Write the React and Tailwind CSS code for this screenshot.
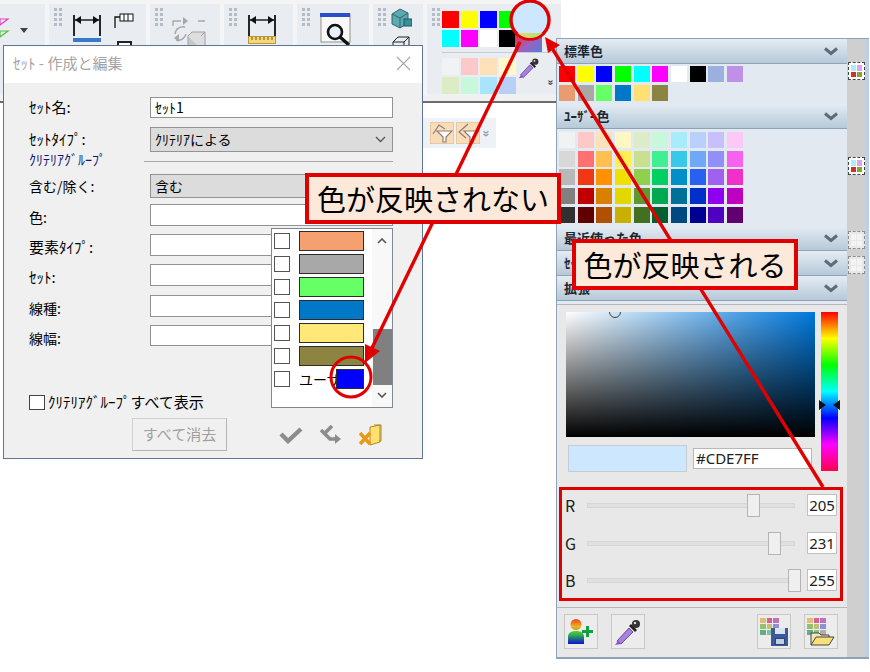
import React from "react";

const STANDARD = ["#ff0000", "#ffff00", "#0000ff", "#00ff00", "#00ffff", "#ff00ff", "#ffffff", "#000000", "#9cb0e0", "#c090e8", "#e89c70", "#a8a8a8", "#66ff66", "#0078c8", "#ffe070", "#8c8440"];
const USER = [
  "#f0f2f4", "#ffc8c8", "#ffe0b8", "#fff8c4", "#dcecc8", "#c8f8dc", "#a8ecfb", "#b8d0fb", "#c8c0fb", "#fcc8f8",
  "#d8d8d8", "#ff7070", "#ffc050", "#fff050", "#c8e090", "#40f090", "#38c8e8", "#70a8f8", "#9090f8", "#f860f0",
  "#b8b8b8", "#f03818", "#ff9000", "#f0e000", "#90d050", "#00d060", "#0090c8", "#2860f0", "#a060f0", "#f030c8",
  "#808080", "#c00000", "#d88000", "#e0d800", "#609830", "#00a850", "#007098", "#0030c8", "#9000f0", "#c000c0",
  "#303030", "#600000", "#b05000", "#c8b000", "#407020", "#006030", "#004880", "#000090", "#5000c0", "#600070",
];
const TOOLBAR_TOP = ["#ff0000", "#ffff00", "#0000ff", "#00ff00", "#00ffff", "#ff00ff", "#ffffff", "#000000"];
const TOOLBAR_FADED = ["#f0f2f4", "#ffc8c8", "#ffe0b8", "#fff8c8", "#dcecc4", "#c8f8dc", "#a8e4fb", "#b8d0f8"];
const DROPDOWN = ["#f4a070", "#a8a8a8", "#66ff66", "#0078c8", "#ffe878", "#8c8440"];

const Grip = () => (
  <div className="grid grid-cols-2 gap-x-[2px] gap-y-[2px] w-[8px] shrink-0">
    {[0, 1, 2, 3, 4, 5, 6, 7].map((i) => (
      <div key={i} className="w-[3px] h-[3px] bg-[#b4bcc6]" />
    ))}
  </div>
);

const Swatches = ({ colors }) => (
  <div className="grid grid-cols-[repeat(10,16px)] gap-[2.67px]">
    {colors.map((c, i) => (
      <div key={i} className="h-[16px]" style={{ backgroundColor: c }} />
    ))}
  </div>
);

const Chevron = () => (
  <svg width="14" height="9" viewBox="0 0 14 9">
    <path d="M1 1.5l6 5 6-5" fill="none" stroke="#5c6c7a" strokeWidth="3" />
  </svg>
);

const SectionHeader = ({ label, className = "" }) => (
  <div className={"h-[25px] flex items-center justify-between pl-[7px] pr-[9px] bg-[linear-gradient(to_bottom,#e4ecf3,#b6c9d8)] border-b border-[#8ea3b6] " + className}>
    <span className="text-[13px] font-bold text-[#1c2630] whitespace-nowrap">{label}</span>
    <Chevron />
  </div>
);

const StripIcon = ({ faded }) => (
  <div className={"w-[17px] h-[18px] border border-dashed p-[2px] grid grid-cols-2 gap-[1px] " + (faded ? "border-[#8c8c8c] bg-[#e8e8e8]" : "border-[#444444] bg-white")}>
    <div className={faded ? "bg-[#f4f4f4]" : "bg-[#a8f0f8]"} />
    <div className={faded ? "bg-[#f4f4f4]" : "bg-[#e8a0e8]"} />
    <div className={faded ? "bg-[#f4f4f4]" : "bg-[#d03030]"} />
    <div className={faded ? "bg-[#f4f4f4]" : "bg-[#80a830]"} />
  </div>
);

const Field = ({ label, className = "", labelClass = "text-[14px]", select, children }) => (
  <div className={"flex items-center " + className}>
    <div className={"w-[121px] text-black whitespace-nowrap " + labelClass}>{label}</div>
    <div className={"w-[243px] h-full border border-[#939393] flex items-center justify-between pl-[4px] pr-[6px] text-[14px] text-black " + (select ? "bg-[#dcdcdc]" : "bg-white")}>
      <span>{children}</span>
      {select && (
        <svg width="11" height="7" viewBox="0 0 11 7">
          <path d="M1 1l4.5 4.5L10 1" fill="none" stroke="#555555" strokeWidth="1.3" />
        </svg>
      )}
    </div>
  </div>
);

const DimIcon = () => (
  <svg width="30" height="21" viewBox="0 0 30 21">
    <path d="M2 0v21M28 0v21" stroke="#111111" strokeWidth="1.8" />
    <path d="M3 5h24" stroke="#111111" strokeWidth="1.4" />
    <path d="M3 5l6-4v8zM27 5l-6-4v8z" fill="#111111" />
  </svg>
);

const SliderRow = ({ label, thumb, value, className = "" }) => (
  <div className={"flex items-center h-[22px] " + className}>
    <div className="w-[24px] text-[16px] text-[#202020] pl-[2px]">{label}</div>
    <div className="relative w-[208px] h-[5px] bg-[#e0e0e0] border border-[#d6d6d6]">
      <div className={"absolute -top-[10px] w-[13px] h-[23px] bg-[#efefef] border border-[#b4b4b4] " + thumb} />
    </div>
    <div className="ml-[12px] w-[30px] h-[22px] bg-white border border-[#c0c0c0] flex items-center justify-center text-[15px] text-[#202020] font-['Noto_Sans',sans-serif]">
      {value}
    </div>
  </div>
);

const IconButton = ({ className = "", children }) => (
  <div className={"w-[34px] h-[35px] bg-[#ececec] border border-[#c8c8c8] flex items-center justify-center " + className}>{children}</div>
);

const Dropper = ({ size = 28 }) => (
  <svg width={size} height={size} viewBox="0 0 28 28">
    <path d="M3 23L15 10l4 4L7 26z" fill="#a880e0" stroke="#54307c" strokeWidth="0.8" />
    <path d="M1 27l3-4 3 3z" fill="#8c50d8" />
    <path d="M15 8l6 6 2-2-6-6z" fill="#222222" />
    <circle cx="22" cy="6" r="4" fill="#333333" />
    <circle cx="21" cy="5" r="1.2" fill="#dddddd" />
  </svg>
);

const MiniPalette = () => (
  <div className="grid grid-cols-3 gap-[1px] w-[19px]">
    {["#e0c070", "#d86090", "#c070c0", "#90c070", "#c0c070", "#9090d0", "#60b080", "#80c0a0", "#b0b0b0"].map((c, i) => (
      <div key={i} className="h-[5px]" style={{ backgroundColor: c }} />
    ))}
  </div>
);

const Toolbar = () => (
  <div className="w-[561px] shrink-0">
    <div className="h-[4px] bg-[#f4f4f4]" />
    <div className="flex gap-[4px] h-[90px] bg-[#f4f5f6]">
      <div className="w-[45px] bg-[#e9edf1] flex items-start pt-[13px]">
        <svg width="10" height="24" viewBox="0 0 10 24">
          <path d="M0 2h8L0 8z" fill="none" stroke="#e040c0" strokeWidth="1.2" />
          <path d="M0 14h8L0 20z" fill="none" stroke="#50c040" strokeWidth="1.2" />
        </svg>
        <svg className="ml-[10px] mt-[11px]" width="8" height="5" viewBox="0 0 8 5">
          <path d="M0 0h8L4 5z" fill="#444444" />
        </svg>
      </div>
      <div className="w-[97px] bg-[#e9edf1] flex items-start pl-[5px] pt-[4px]">
        <Grip />
        <div className="ml-[10px] mt-[7px] flex flex-col">
          <DimIcon />
          <div className="w-[28px] h-[4px] mt-[2px] ml-[1px] bg-[#3a78c8]" />
        </div>
        <div className="ml-[12px] mt-[5px] flex flex-col items-center">
          <svg width="20" height="16" viewBox="0 0 20 16">
            <path d="M1 15V4h5" fill="none" stroke="#111111" strokeWidth="1.3" />
            <rect x="6" y="1" width="13" height="7" fill="#ffffff" stroke="#111111" />
            <path d="M10 1v7M14 1v7" stroke="#111111" />
          </svg>
          <div className="w-[15px] h-[12px] mt-[12px] bg-white border-2 border-[#222222]" />
        </div>
      </div>
      <div className="w-[70px] bg-[#e9edf1] flex items-start pl-[5px] pt-[4px]">
        <Grip />
        <svg className="ml-[9px] mt-[8px]" width="34" height="36" viewBox="0 0 34 36">
          <path d="M1 10V5h8M26 5h7M3 18a8 8 0 0 1 10-7M14 18a8 8 0 0 1-10 6" fill="none" stroke="#a8a8a8" strokeWidth="1.4" />
          <path d="M11 1l5 4-5 4zM7 18l-5 4 5 4z" fill="#a8a8a8" />
          <rect x="16" y="20" width="13" height="13" fill="#c8c8c8" stroke="#a0a0a0" />
          <path d="M16 20l4-4h13v13l-4 4M29 20l4-4" fill="#dedede" stroke="#a0a0a0" />
        </svg>
      </div>
      <div className="w-[69px] bg-[#e9edf1] flex items-start pl-[5px] pt-[4px]">
        <Grip />
        <div className="ml-[10px] mt-[7px] flex flex-col">
          <DimIcon />
          <svg width="28" height="8" viewBox="0 0 28 8" className="ml-[1px]">
            <rect x="0.5" y="0.5" width="27" height="7" fill="#f4d878" stroke="#b89838" />
            <path d="M4 1v3M8 1v3M12 1v3M16 1v3M20 1v3M24 1v3" stroke="#6c5818" />
          </svg>
        </div>
      </div>
      <div className="w-[72px] bg-[#e9edf1] flex items-start pl-[5px] pt-[4px]">
        <Grip />
        <svg className="ml-[10px] mt-[5px]" width="32" height="36" viewBox="0 0 32 36">
          <rect x="1" y="1" width="29" height="28" fill="#f8f8f8" stroke="#909090" />
          <rect x="0" y="0" width="30" height="4" fill="#2a50c8" />
          <circle cx="15" cy="19" r="7" fill="#e8f0fa" stroke="#111111" strokeWidth="2.6" />
          <path d="M20 24l9 8" stroke="#111111" strokeWidth="3.2" />
        </svg>
      </div>
      <div className="w-[50px] bg-[#e9edf1] flex items-start pl-[5px] pt-[4px]">
        <Grip />
        <div className="ml-[4px] flex flex-col items-center">
          <svg width="22" height="22" viewBox="0 0 22 22">
            <path d="M2 6l8-5 8 4v10l-8 5-8-4z" fill="#5ea8b0" stroke="#2c6870" />
            <path d="M2 6l8 4 8-5M10 10v10" fill="none" stroke="#2c6870" />
            <rect x="14" y="11" width="8" height="7" fill="#3a9098" stroke="#1c5860" />
          </svg>
          <svg className="mt-[6px]" width="18" height="14" viewBox="0 0 18 14">
            <path d="M1 6l5-5h11v8l-5 4H1zM1 6h11v7M12 6l5-5" fill="none" stroke="#222222" />
          </svg>
        </div>
      </div>
      <div className="flex-1 bg-[#e9edf1] pl-[5px] pt-[3px] flex items-start">
        <div className="mt-[1px]"><Grip /></div>
        <div className="ml-[2px] mt-[4px] w-[115px] relative">
          <div className="grid grid-cols-[repeat(4,17px)] gap-[2px]">
            {TOOLBAR_TOP.map((c, i) => (
              <div key={i} className="h-[17px]" style={{ backgroundColor: c }} />
            ))}
          </div>
          <div className="h-[1px] mt-[5px] mr-[2px] bg-[#c6ccd2]" />
          <div className="grid grid-cols-[repeat(4,17px)] gap-[2px] mt-[5px]">
            {TOOLBAR_FADED.map((c, i) => (
              <div key={i} className="h-[17px]" style={{ backgroundColor: c }} />
            ))}
          </div>
          {/* colour wheel button and dropper sit over the swatch block */}
          <div className="absolute left-[73px] top-[24px] w-[27px] h-[17px] bg-[linear-gradient(135deg,#e83030,#a060c0_50%,#5080d8)]" />
          <div className="absolute left-[76px] top-[46px]">
            <Dropper size={22} />
          </div>
          <div className="absolute left-[107px] top-[66px] text-[11px] leading-none text-[#333333] font-bold rotate-90">»</div>
        </div>
      </div>
    </div>
    <div className="h-[7px] bg-[#f0f1f2]" />
    <div className="h-[2px] bg-[#6c6c6c]" />
    <div className="ml-[422px] mt-[15px] w-[74px] h-[30px] bg-[#eef2f7] flex items-center pl-[8px] gap-[2px]">
      <div className="w-[24px] h-[22px] bg-[#fbdcb8] border border-[#e8c8a0] flex items-center justify-center">
        <svg width="22" height="20" viewBox="0 0 22 20">
          <path d="M2 11L8 2l6 4" fill="none" stroke="#888078" strokeWidth="1.2" />
          <path d="M6 8h15l-6 6v5h-3v-5z" fill="#ffffff" stroke="#888078" strokeWidth="1.2" />
        </svg>
      </div>
      <div className="w-[24px] h-[22px] bg-[#fbdcb8] border border-[#e8c8a0] flex items-center justify-center">
        <svg width="22" height="20" viewBox="0 0 22 20">
          <path d="M11 1L2 9l7 6" fill="none" stroke="#888078" strokeWidth="1.2" />
          <path d="M7 8h15l-6 6v5h-3v-5z" fill="#ffffff" stroke="#888078" strokeWidth="1.2" />
        </svg>
      </div>
      <span className="ml-[2px] text-[13px] leading-none text-[#8c98a8] font-bold rotate-90">»</span>
    </div>
  </div>
);

const Dialog = () => (
  <div className="absolute left-[3px] top-[45px] w-[420px] h-[414px] z-10 border border-[#5f7596] bg-[#f0f0f0]">
    <div className="h-[37px] bg-white flex items-center justify-between pl-[9px] pr-[11px] pb-[3px]">
      <span className="text-[15px] text-[#a4a4a4]">ｾｯﾄ - 作成と編集</span>
      <svg width="15" height="15" viewBox="0 0 15 15">
        <path d="M1 1l13 13M14 1L1 14" stroke="#a8a8a8" strokeWidth="1.1" />
      </svg>
    </div>
    <div className="pl-[25px] pt-[14px]">
      <Field label="ｾｯﾄ名:" labelClass="text-[15px]" className="h-[21px]">ｾｯﾄ1</Field>
      <Field label="ｾｯﾄﾀｲﾌﾟ:" labelClass="text-[15px]" className="h-[25px] mt-[9px]" select>ｸﾘﾃﾘｱによる</Field>
      <div className="h-[22px] flex items-start">
        <span className="text-[14px] leading-[16px] mt-[-1px] w-[115px] text-[#14146e] whitespace-nowrap">ｸﾘﾃﾘｱｸﾞﾙｰﾌﾟ</span>
        <div className="w-[249px] h-[1px] mt-[9px] bg-[#a8a8a8]" />
      </div>
      <Field label="含む/除く:" className="h-[24px]" select>含む</Field>
      <Field label="色:" labelClass="text-[14px] pt-[5px]" className="h-[22px] mt-[6px]" />
      <Field label="要素ﾀｲﾌﾟ:" labelClass="text-[15px] pt-[5px]" className="h-[22px] mt-[8px]" />
      <Field label="ｾｯﾄ:" labelClass="text-[15px] pt-[5px]" className="h-[22px] mt-[8px]" />
      <Field label="線種:" labelClass="text-[14px] pt-[5px]" className="h-[22px] mt-[9px]" />
      <Field label="線幅:" labelClass="text-[14px] pt-[5px]" className="h-[21px] mt-[8px]" />
      <div className="flex items-center mt-[49px] h-[15px]">
        <div className="w-[16px] h-[15px] bg-white border border-[#444444]" />
        <span className="ml-[3px] text-[15px] text-black whitespace-nowrap">ｸﾘﾃﾘｱｸﾞﾙｰﾌﾟすべて表示</span>
      </div>
      <div className="flex items-center mt-[8px]">
        <div className="ml-[103px] w-[95px] h-[33px] bg-[#f0f0f0] border border-[#d0d0d0] border-b-[#b4b4b4] border-r-[#b4b4b4] flex items-center justify-center text-[15px] text-[#a0a0a0]">
          すべて消去
        </div>
        <svg className="ml-[52px]" width="24" height="18" viewBox="0 0 24 18">
          <path d="M2 8l7 7L22 3" fill="none" stroke="#8c8c8c" strokeWidth="4.4" />
        </svg>
        <svg className="ml-[16px]" width="24" height="20" viewBox="0 0 24 20">
          <path d="M2 5l9 9h8" fill="none" stroke="#8c8c8c" strokeWidth="3.6" />
          <path d="M13 1L5 9" stroke="#8c8c8c" strokeWidth="3.6" />
          <path d="M16 9l6 5-6 5z" fill="#8c8c8c" />
        </svg>
        <svg className="ml-[16px]" width="23" height="22" viewBox="0 0 23 22">
          <path d="M11 3l10-2v17l-10 3z" fill="#ffe070" stroke="#b08820" />
          <path d="M15 1h7v16h-2" fill="none" stroke="#b08820" />
          <path d="M1 9l10 11M11 9L1 20" stroke="#e89818" strokeWidth="3.6" />
        </svg>
      </div>
    </div>

    {/* open colour dropdown */}
    <div className="absolute left-[267px] top-[182px] w-[122px] h-[180px] bg-white border border-[#7f8790] flex">
      <div className="w-[100px] pl-[2px] pt-[2px]">
        {DROPDOWN.map((c) => (
          <div key={c} className="flex items-center h-[20px] mb-[3px]">
            <div className="w-[16px] h-[16px] border border-[#555555] bg-white" />
            <div className="ml-[9px] w-[65px] h-[20px] border border-[#2c2c2c]" style={{ backgroundColor: c }} />
          </div>
        ))}
        <div className="flex items-center h-[20px]">
          <div className="w-[16px] h-[16px] border border-[#555555] bg-white" />
          <div className="ml-[9px] w-[37px] whitespace-nowrap text-[14px] text-black">ユーザー</div>
          <div className="relative w-[28px] h-[20px] bg-[#0000ff] border border-[#2c2c2c]" />
        </div>
      </div>
      <div className="w-[20px] bg-[#f8f8f8] flex flex-col items-center pt-[9px]">
        <svg width="10" height="6" viewBox="0 0 10 6">
          <path d="M1 5l4-4 4 4" fill="none" stroke="#555555" strokeWidth="1.6" />
        </svg>
        <div className="w-[19px] h-[56px] mt-[85px] bg-[#808080]" />
        <svg className="mt-[7px]" width="10" height="6" viewBox="0 0 10 6">
          <path d="M1 1l4 4 4-4" fill="none" stroke="#555555" strokeWidth="1.6" />
        </svg>
      </div>
    </div>
  </div>
);

const ColorPanel = () => (
  <div className="relative z-10 -ml-[5px] mt-[38px] w-[313px] h-[621px] flex border-t border-b-2 border-l border-[#8ea3b6] bg-[#e2e9f1] font-['Noto_Sans_CJK_JP',sans-serif]">
    <div className="w-[290px] flex flex-col">
      <SectionHeader label="標準色" />
      <div className="h-[40px] pl-[2px] pt-[2px] bg-[#e2e9f1]">
        <Swatches colors={STANDARD} />
      </div>
      <SectionHeader label="ﾕｰｻﾞｰ色" />
      <div className="h-[97px] pl-[2px] pt-[3px] bg-[#e2e9f1]">
        <Swatches colors={USER} />
      </div>
      <SectionHeader label="最近使った色" />
      <SectionHeader label="ｾｯﾄ" />
      <SectionHeader label="拡張" />
      <div className="mt-[3px] h-[304px] bg-[#e8e8e8] border-t border-b border-[#b4b8bc] pt-[7px]">
        <div className="flex pl-[9px]">
          <div className="w-[249px]">
            <div className="relative w-[249px] h-[125px] overflow-hidden bg-[linear-gradient(to_bottom,transparent,#000000),linear-gradient(to_right,#ffffff,#0078dc)]">
              <div className="absolute left-[43px] -top-[6px] w-[12px] h-[12px] rounded-full border border-[#404040]" />
            </div>
            <div className="flex mt-[8px] pl-[2px]">
              <div className="w-[119px] h-[27px] bg-[#cde7ff] border border-[#c4ccd4]" />
              <div className="ml-[6px] mt-[3px] w-[119px] h-[21px] bg-white border border-[#b8b8b8] flex items-center pl-[2px] text-[15px] text-[#202020] font-['Noto_Sans',sans-serif]">
                #CDE7FF
              </div>
            </div>
          </div>
          <div className="relative ml-[6px] w-[17px] h-[159px] bg-[linear-gradient(to_bottom,#ff0000,#ffff00,#00ff00,#00ffff,#0000ff,#ff00ff,#ff0050)]">
            <svg className="absolute -left-[2px] top-[88px]" width="21" height="10" viewBox="0 0 21 10">
              <path d="M0 0l7 5-7 5zM21 0l-7 5 7 5z" fill="#111111" />
            </svg>
          </div>
        </div>
        <div className="ml-[2px] mt-[15px] w-[284px] h-[114px] border-[3px] border-[#e00000] pt-[4px] pl-[1px]">
          <SliderRow label="R" value="205" thumb="left-[159px]" />
          <SliderRow label="G" value="231" thumb="left-[180px]" className="mt-[16px]" />
          <SliderRow label="B" value="255" thumb="left-[200px]" className="mt-[15px]" />
        </div>
      </div>
      <div className="flex-1 bg-[#e8e8e8] flex items-start pl-[7px] pt-[6px]">
        <IconButton>
          <svg width="28" height="28" viewBox="0 0 28 28">
            <defs>
              <linearGradient id="person" x1="0" y1="0" x2="0" y2="1">
                <stop offset="0" stopColor="#f04020" />
                <stop offset="0.3" stopColor="#f0b020" />
                <stop offset="0.6" stopColor="#30c040" />
                <stop offset="1" stopColor="#1010d0" />
              </linearGradient>
            </defs>
            <path d="M9 1a5 5 0 0 1 0 11 5 5 0 0 1 0-11zM1 26v-7c0-4 3-6 8-6s8 2 8 6v7z" fill="url(#person)" />
            <path d="M19 8h3v4h4v3h-4v4h-3v-4h-4v-3h4z" fill="#10a040" />
          </svg>
        </IconButton>
        <IconButton className="ml-[13px]">
          <Dropper />
        </IconButton>
        <IconButton className="ml-[112px]">
          <div className="relative w-[28px] h-[28px]">
            <MiniPalette />
            <div className="absolute right-0 bottom-0 w-[17px] h-[18px] bg-[#3c5a98] flex flex-col items-center justify-between pb-[1px]">
              <div className="w-[10px] h-[6px] bg-[#d8e4f0]" />
              <div className="w-[10px] h-[7px] bg-[#c0d0e4] border border-[#2c4478]" />
            </div>
          </div>
        </IconButton>
        <IconButton className="ml-[13px]">
          <div className="relative w-[28px] h-[28px]">
            <MiniPalette />
            <svg className="absolute left-[3px] bottom-0" width="25" height="16" viewBox="0 0 25 16">
              <path d="M1 15V3h8l2 2h8v3" fill="#f4e8b0" stroke="#444444" />
              <path d="M1 15l5-8h18l-5 8z" fill="#f8e078" stroke="#444444" />
            </svg>
          </div>
        </IconButton>
      </div>
    </div>
    <div className="w-[19px] bg-[#cfcfcf] flex flex-col items-center">
      <div className="mt-[23px]"><StripIcon /></div>
      <div className="mt-[77px]"><StripIcon /></div>
      <div className="mt-[56px]"><StripIcon faded /></div>
      <div className="mt-[7px]"><StripIcon faded /></div>
    </div>
    <div className="w-[3px] bg-[#b9d0e8]" />
  </div>
);

export default function App() {
  return (
    <div className="relative w-[870px] h-[672px] overflow-hidden bg-white font-['Noto_Sans_CJK_JP',sans-serif] flex items-start">
      <Toolbar />
      <ColorPanel />
      <Dialog />

      {/* red annotations drawn on top of the screenshot */}
      <svg className="absolute left-0 top-0 z-20 pointer-events-none" width="870" height="672" viewBox="0 0 870 672">
        <defs>
          <clipPath id="ringClip">
            <circle cx="530" cy="20" r="18" />
          </clipPath>
          <linearGradient id="wheelTop" x1="0" y1="0" x2="1" y2="0">
            <stop offset="0" stopColor="#f0d878" />
            <stop offset="1" stopColor="#a8e070" />
          </linearGradient>
        </defs>
        <circle cx="530" cy="20" r="19" fill="#cde7ff" stroke="#e00000" strokeWidth="3.4" />
        <rect x="515" y="33" width="30" height="8" fill="url(#wheelTop)" clipPath="url(#ringClip)" />
        <line x1="520" y1="42" x2="371" y2="350" stroke="#e00000" strokeWidth="3.4" />
        <polygon points="365,363 380,351 365,344" fill="#e00000" />
        <line x1="552" y1="48" x2="823" y2="487" stroke="#e00000" strokeWidth="3.4" />
        <polygon points="545,37 560,45 548,53" fill="#e00000" />
        <circle cx="351" cy="377" r="20" fill="none" stroke="#e00000" strokeWidth="3" />
      </svg>

      <div className="absolute left-[305px] top-[173px] z-30 w-[256px] h-[51px] bg-[#fde9d9] border-[4px] border-[#e00000] flex items-center justify-center text-[29px] leading-none text-black whitespace-nowrap">
        色が反映されない
      </div>
      <div className="absolute left-[572px] top-[239px] z-30 w-[226px] h-[51px] bg-[#fde9d9] border-[4px] border-[#e00000] flex items-center justify-center text-[29px] leading-none text-black whitespace-nowrap">
        色が反映される
      </div>
    </div>
  );
}
